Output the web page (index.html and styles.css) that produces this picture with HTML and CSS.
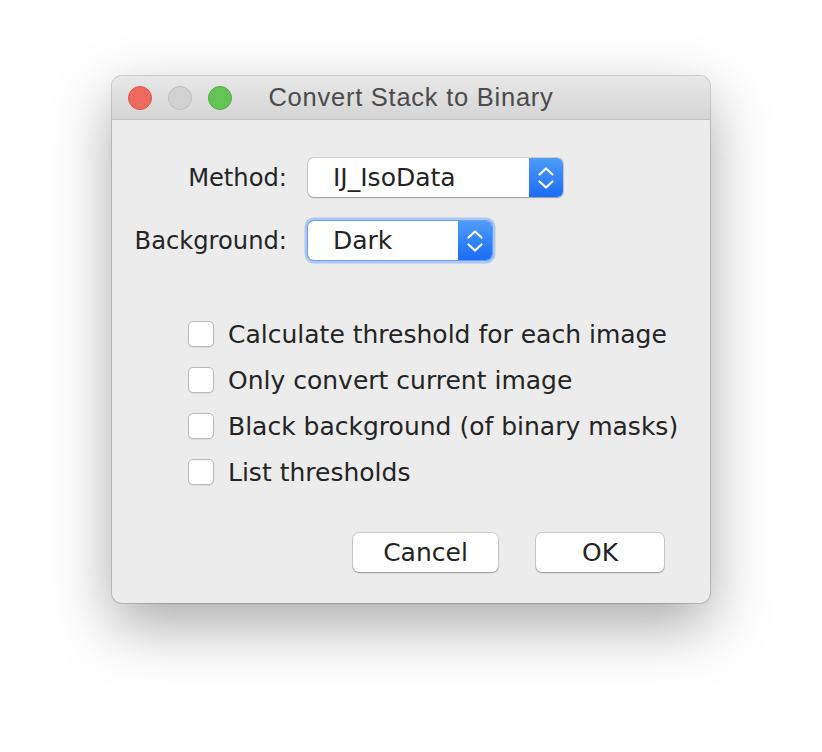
FILE: index.html
```html
<!DOCTYPE html>
<html>
<head>
<meta charset="utf-8">
<link rel="stylesheet" href="styles.css">
</head>
<body>
<div class="stage">
  <div class="window">
    <div class="titlebar">
      <div class="lights">
        <span class="light red"></span>
        <span class="light gray"></span>
        <span class="light green"></span>
      </div>
      <div class="title">Convert Stack to Binary</div>
    </div>
    <div class="content">
      <div class="form">
        <div class="label">Method:</div>
        <div class="combo combo-method">
          <span class="combo-text">IJ_IsoData</span>
          <span class="combo-arrows"><svg width="18" height="26" viewBox="0 0 18 26"><path d="M2.5 9.5 L9 3.5 L15.5 9.5 M2.5 16.5 L9 22.5 L15.5 16.5" fill="none" stroke="#fff" stroke-width="2.2" stroke-linecap="round" stroke-linejoin="round"/></svg></span>
        </div>
        <div class="label">Background:</div>
        <div class="combo combo-bg focused">
          <span class="combo-text">Dark</span>
          <span class="combo-arrows"><svg width="18" height="26" viewBox="0 0 18 26"><path d="M2.5 9.5 L9 3.5 L15.5 9.5 M2.5 16.5 L9 22.5 L15.5 16.5" fill="none" stroke="#fff" stroke-width="2.2" stroke-linecap="round" stroke-linejoin="round"/></svg></span>
        </div>
      </div>
      <div class="checks">
        <div class="check"><span class="box"></span><span class="check-label">Calculate threshold for each image</span></div>
        <div class="check"><span class="box"></span><span class="check-label">Only convert current image</span></div>
        <div class="check"><span class="box"></span><span class="check-label">Black background (of binary masks)</span></div>
        <div class="check"><span class="box"></span><span class="check-label">List thresholds</span></div>
      </div>
      <div class="buttons">
        <div class="btn btn-cancel">Cancel</div>
        <div class="btn btn-ok">OK</div>
      </div>
    </div>
  </div>
</div>
</body>
</html>
```
FILE: styles.css
```css
html, body {
  margin: 0;
  padding: 0;
  background: #ffffff;
}
.stage {
  padding-top: 76px;
  padding-left: 112px;
  min-height: 752px;
  box-sizing: border-box;
}
.window {
  width: 598px;
  height: 527px;
  background: #ececec;
  border-radius: 10px;
  box-shadow: 0 0 0 1px rgba(0,0,0,0.16), 0 22px 60px rgba(0,0,0,0.34);
  overflow: hidden;
  display: flex;
  flex-direction: column;
  font-family: "DejaVu Sans", sans-serif;
  color: #242424;
}
.titlebar {
  height: 43px;
  flex: none;
  background: linear-gradient(#e8e8e8, #d5d5d5);
  border-bottom: 1px solid #c3c3c3;
  display: flex;
  align-items: center;
  position: relative;
}
.lights {
  display: flex;
  gap: 16px;
  padding-left: 16px;
  position: relative;
  z-index: 1;
}
.light {
  width: 24px;
  height: 24px;
  border-radius: 50%;
  box-sizing: border-box;
}
.red { background: #ee6a5f; border: 1px solid #d6574b; }
.gray { background: #d2d2d2; border: 1px solid #bdbdbd; }
.green { background: #62c554; border: 1px solid #54ab45; }
.title {
  position: absolute;
  left: 0;
  right: 0;
  top: 0;
  bottom: 0;
  display: flex;
  align-items: center;
  justify-content: center;
  font-family: "Liberation Sans", sans-serif;
  font-size: 25.5px;
  letter-spacing: 0.75px;
  color: #4b4b4b;
  padding-bottom: 1px;
}
.content {
  flex: 1;
  display: flex;
  flex-direction: column;
}
.form {
  display: grid;
  grid-template-columns: 175px auto;
  column-gap: 21px;
  row-gap: 24px;
  padding-top: 38px;
  align-items: center;
  justify-items: start;
}
.label {
  justify-self: end;
  font-size: 24.2px;
}
.combo {
  height: 39px;
  box-sizing: border-box;
  background: #fff;
  border-radius: 6px;
  box-shadow: 0 0 0 1px rgba(0,0,0,0.12), 0 1px 1.5px rgba(0,0,0,0.25);
  display: flex;
  align-items: stretch;
  overflow: hidden;
}
.combo-method { width: 255px; }
.combo-bg { width: 184px; }
.combo-bg.focused {
  box-shadow: 0 0 0 1px rgba(60,130,240,0.6), 0 0 0 3.5px rgba(120,170,245,0.55);
}
.combo-text {
  flex: 1;
  padding-left: 25px;
  font-size: 25px;
  line-height: 39px;
}
.combo-arrows {
  width: 34px;
  background: linear-gradient(#4f9cfa, #1a6cf7);
  display: flex;
  align-items: center;
  justify-content: center;
}
.checks {
  padding-left: 76px;
  padding-top: 61px;
  display: flex;
  flex-direction: column;
  gap: 20px;
}
.check {
  display: flex;
  align-items: center;
  height: 26px;
}
.box {
  width: 26px;
  height: 26px;
  box-sizing: border-box;
  background: #fff;
  border: 1px solid #b9b9b9;
  border-radius: 5px;
  box-shadow: 0 1px 1px rgba(0,0,0,0.08);
  flex: none;
}
.check-label {
  margin-left: 14px;
  font-size: 25px;
}
.buttons {
  display: flex;
  justify-content: flex-end;
  gap: 38px;
  padding-right: 46px;
  padding-top: 48px;
}
.btn {
  height: 39px;
  box-sizing: border-box;
  background: #fff;
  border-radius: 6px;
  box-shadow: 0 0 0 1px rgba(0,0,0,0.12), 0 1px 1.5px rgba(0,0,0,0.28);
  font-size: 25px;
  line-height: 39px;
  text-align: center;
}
.btn-cancel { width: 145px; }
.btn-ok { width: 128px; }
```
